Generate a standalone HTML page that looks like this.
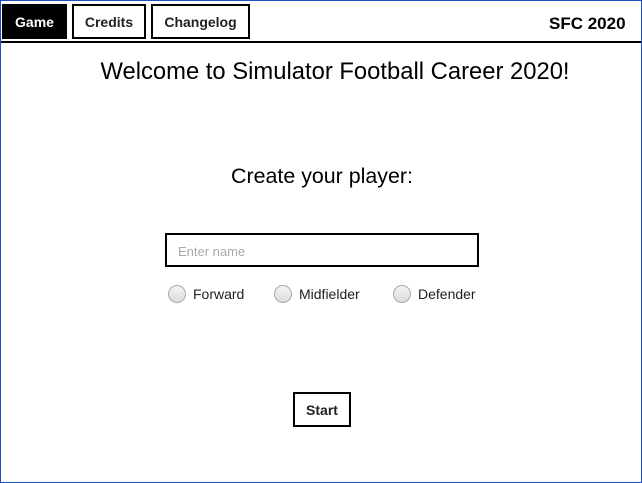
<!DOCTYPE html>
<html><head><meta charset="utf-8"><style>
*{box-sizing:border-box;margin:0;padding:0}
body{width:642px;height:483px;overflow:hidden;background:#fff;font-family:"Liberation Sans",sans-serif;position:relative;color:#000}
.frame{position:absolute;left:0;top:0;width:642px;height:483px;border:1px solid #1f4fc0;}
.a{position:absolute}
.btn{position:absolute;border:2px solid #000;font-weight:bold;font-size:14px;display:flex;align-items:center;justify-content:center;color:#222;background:#fff}
.radio{position:absolute;width:18px;height:18px;border-radius:50%;border:1px solid #aaa;background:linear-gradient(#f4f4f4,#dcdcdc)}
.lbl{position:absolute;font-size:14px;color:#222}
</style></head><body>
<div class="frame"></div>
<div class="btn" style="left:2px;top:4px;width:65px;height:35px;background:#000;color:#fff;border-color:#000">Game</div>
<div class="btn" style="left:72px;top:4px;width:74px;height:35px">Credits</div>
<div class="btn" style="left:151px;top:4px;width:99px;height:35px">Changelog</div>
<div class="a" style="left:549px;top:14px;font-size:17px;font-weight:bold">SFC 2020</div>
<div class="a" style="left:1px;top:41px;width:640px;height:2px;background:#000"></div>
<div class="a" style="left:0;top:58px;width:670px;text-align:center;font-size:23.8px">Welcome to Simulator Football Career 2020!</div>
<div class="a" style="left:0;top:164px;width:644px;text-align:center;font-size:21.4px">Create your player:</div>
<div class="a" style="left:165px;top:233px;width:314px;height:34px;border:2px solid #000;font-size:13px;color:#aaa;padding:9px 0 0 11px">Enter name</div>
<div class="radio" style="left:168px;top:285px"></div><div class="lbl" style="left:193px;top:286px">Forward</div>
<div class="radio" style="left:274px;top:285px"></div><div class="lbl" style="left:299px;top:286px">Midfielder</div>
<div class="radio" style="left:393px;top:285px"></div><div class="lbl" style="left:418px;top:286px">Defender</div>
<div class="btn" style="left:293px;top:392px;width:58px;height:35px">Start</div>
</body></html>
